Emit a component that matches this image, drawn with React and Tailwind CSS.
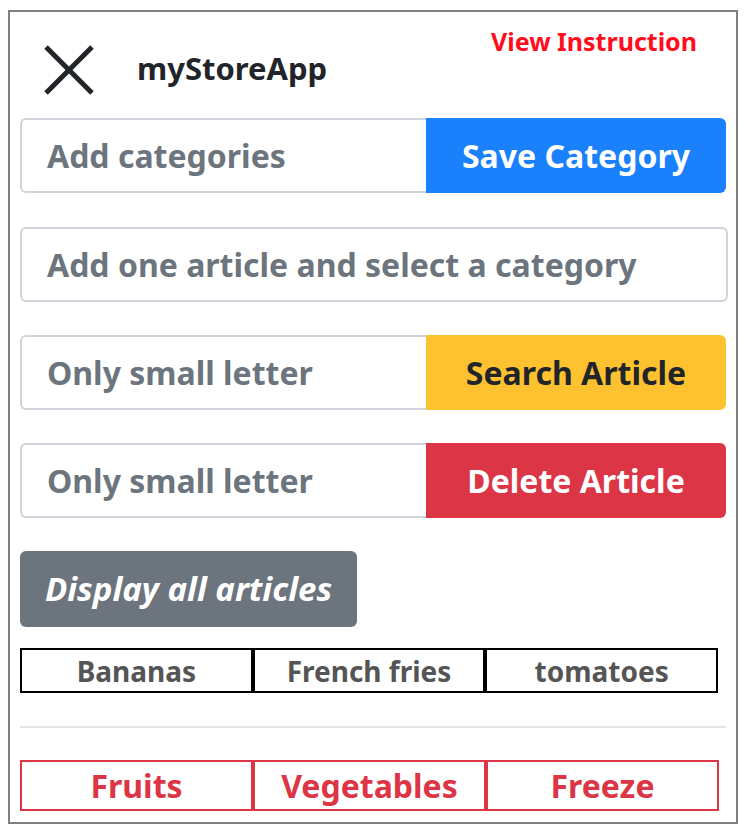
import React from "react";

const font = { fontFamily: '"Noto Sans", "Open Sans", sans-serif' };

function InputGroup({ placeholder, label, btnClass }) {
  return (
    <div className="flex h-[75px] w-[706px]">
      <div className="flex flex-1 items-center rounded-l-[6px] border-2 border-r-0 border-[#ced4da] pl-[25px] text-[32px] font-bold text-[#6c757d]">
        {placeholder}
      </div>
      <div className={`flex w-[300px] items-center justify-center rounded-r-[6px] text-[32px] font-bold ${btnClass}`}>
        {label}
      </div>
    </div>
  );
}

export default function App() {
  return (
    <div className="pl-[8px] pt-[10px] bg-white" style={font}>
      <div className="flex h-[814px] w-[730px] flex-col border-2 border-[#808080] px-[10px]">
        <div className="flex h-[106px] items-start justify-between">
          <div className="ml-[24px] mt-[33px] flex items-center">
            <svg width="50" height="50" viewBox="0 0 50 50">
              <line x1="2" y1="2" x2="48" y2="48" stroke="#212529" strokeWidth="5" />
              <line x1="48" y1="2" x2="2" y2="48" stroke="#212529" strokeWidth="5" />
            </svg>
            <span className="ml-[43px] -mt-[4px] text-[31px] font-bold text-[#212529]">myStoreApp</span>
          </div>
          <div className="mr-[29px] mt-[11px] text-[25px] font-bold text-[#ff0d1d]">View Instruction</div>
        </div>

        <InputGroup placeholder="Add categories" label="Save Category" btnClass="bg-[#1a80fb] text-white" />

        <div className="mt-[34px] flex h-[75px] w-[708px] items-center rounded-[6px] border-2 border-[#ced4da] pl-[25px] text-[32px] font-bold text-[#6c757d]">
          Add one article and select a category
        </div>

        <div className="mt-[33px]">
          <InputGroup placeholder="Only small letter" label="Search Article" btnClass="bg-[#fec12f] text-[#212529]" />
        </div>
        <div className="mt-[33px]">
          <InputGroup placeholder="Only small letter" label="Delete Article" btnClass="bg-[#dc3545] text-white" />
        </div>

        <div className="mt-[33px] flex h-[76px] w-[337px] items-center justify-center rounded-[6px] bg-[#6c757d] text-[33px] font-bold italic text-white">
          Display all articles
        </div>

        <div className="mt-[21px] flex w-[698px]">
          {["Bananas", "French fries", "tomatoes"].map((t) => (
            <div key={t} className="flex h-[45px] flex-1 items-center justify-center border-2 border-black text-[28px] font-bold text-[#555555]">
              {t}
            </div>
          ))}
        </div>

        <div className="mt-[33px] h-[2px] w-[706px] bg-[#e5e5e5]" />

        <div className="mt-[32px] flex w-[699px]">
          {["Fruits", "Vegetables", "Freeze"].map((t) => (
            <div key={t} className="flex h-[51px] flex-1 items-center justify-center border-2 border-[#dc3545] text-[32px] font-bold text-[#dc3545]">
              {t}
            </div>
          ))}
        </div>
      </div>
    </div>
  );
}
